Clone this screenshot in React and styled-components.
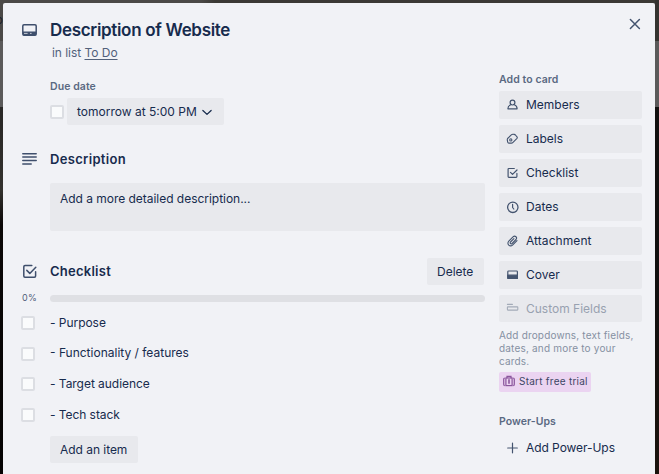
import React from "react";
import styled, { createGlobalStyle } from "styled-components";

const Global = createGlobalStyle`
  *, *::before, *::after { box-sizing: border-box; }
  body { margin: 0; overflow: hidden; }
`;

const Backdrop = styled.div`
  position: relative;
  height: 474px;
  padding: 3px 4px 0 3px;
  font-family: Inter, "Liberation Sans", sans-serif;
  font-size: 12px;
  line-height: 16px;
  color: #172b4d;
  background:
    linear-gradient(#353330 0 41px, #5b5a5a 41px 107px, #12100f 107px 300px, #1b120c) 100% 0 / 4px 100% no-repeat,
    linear-gradient(90deg, transparent 200px, #3b3935 215px) 0 0 / 100% 3px no-repeat,
    linear-gradient(#4b4947 0 41px, #5b5a5a 41px 107px, #2a2826 107px 125px, #34322e 190px, #0b0807 225px, #050303);
`;

/* End of the board title that shows beside the dialog */
const BoardTitle = styled.span`
  position: absolute;
  left: 0;
  top: 12px;
  width: 3px;
  overflow: hidden;
  direction: rtl;
  color: #1c2028;
`;

const Dialog = styled.main`
  display: grid;
  grid-template-columns: 435px 143px;
  column-gap: 14px;
  height: 471px;
  padding: 0 13px 0 47px;
  background: #f1f2f6;
  border-radius: 2px 2px 0 0;
  overflow: hidden;
`;

const Column = styled.section`
  display: flex;
  flex-direction: column;
  align-items: stretch;
  min-width: 0;
`;

const Text = styled.span`
  letter-spacing: ${(p) => p.$track || 0}px;
  white-space: nowrap;
`;

const Heading = styled.header`
  display: flex;
  align-items: center;
  height: ${(p) => p.$h || 20}px;
  margin-top: ${(p) => p.$top}px;
  margin-left: -29px;
`;

const HeadIcon = styled.span`
  display: flex;
  width: 29px;
  color: #3f4f6c;
`;

const Title = styled.h1`
  margin: 0;
  font-size: 17px;
  line-height: 20px;
  font-weight: 600;
  letter-spacing: -0.32px;
`;

const SectionTitle = styled.h2`
  flex: 1;
  margin: 0;
  padding-bottom: ${(p) => p.$lift || 0}px;
  font-size: 13px;
  line-height: 18px;
  font-weight: 600;
  letter-spacing: ${(p) => p.$track || 0}px;
`;

const InList = styled.p`
  margin: 5px 0 0 2px;
  color: #52617b;
  height: 16px;
  a { text-decoration: underline; text-underline-offset: 2px; }
`;

const Label = styled.h3`
  margin: ${(p) => p.$top}px 0 0;
  height: 14px;
  font-size: 10.5px;
  line-height: 14px;
  font-weight: 600;
  color: #5a6982;
  letter-spacing: ${(p) => p.$track || 0}px;
`;

const DueRow = styled.div`
  display: flex;
  align-items: center;
  gap: 3px;
  margin-top: 4px;
`;

const Check = styled.span`
  flex: none;
  width: 14px;
  height: 14px;
  border: 2px solid #dcdee3;
  border-radius: 2px;
  background: #fafbfc;
`;

const Button = styled.button`
  display: flex;
  align-items: center;
  flex: none;
  gap: 4px;
  width: ${(p) => p.$w}px;
  height: 27px;
  margin: ${(p) => p.$m || "0"};
  padding: ${(p) => p.$drop || 0}px 0 0 10px;
  border: 0;
  border-radius: 2px;
  background: #e8e9ed;
  color: inherit;
  font: inherit;
`;

const Editor = styled.div`
  height: 48px;
  margin-top: 15px;
  padding: 8px 10px;
  border-radius: 2px;
  background: #e8e9ed;
`;

const Progress = styled.div`
  display: flex;
  align-items: center;
  height: 12px;
  margin: 7px 0 0 -28px;
  font-size: 9px;
  color: #52617b;
`;

const Percent = styled.span`
  width: 28px;
  letter-spacing: 0.3px;
`;

const Track = styled.span`
  flex: 1;
  height: 7px;
  border-radius: 4px;
  background: #dfe0e4;
`;

const Items = styled.ul`
  display: flex;
  flex-direction: column;
  gap: 14.6px;
  margin: 11px 0 0 -29px;
  padding: 0;
  list-style: none;
`;

const Item = styled.li`
  display: flex;
  align-items: center;
  gap: 15px;
  height: 16px;
  ${Text} { padding-bottom: ${(p) => p.$lift || 0}px; }
`;

const Actions = styled.nav`
  display: flex;
  flex-direction: column;
  gap: 6px;
  margin-top: ${(p) => p.$top}px;
`;

const Action = styled.button`
  display: flex;
  align-items: center;
  height: ${(p) => (p.$disabled ? 27 : 28)}px;
  padding: 0 0 0 7px;
  border: 0;
  border-radius: 2px;
  background: ${(p) => (p.$plain ? "transparent" : "#e8e9ed")};
  color: ${(p) => (p.$disabled ? "#98a1b0" : "inherit")};
  font: inherit;
  text-align: left;
  svg { flex: none; width: 14px; height: 14px; margin: 0 6px 1px 0; color: ${(p) => (p.$disabled ? "#a3abb8" : "#44546f")}; }
`;

const Hint = styled.p`
  margin: 7px 0 0;
  font-size: 10px;
  line-height: 13px;
  color: #8590a2;
`;

const Line = styled(Text)`
  display: block;
`;

const Trial = styled.a`
  display: flex;
  align-items: center;
  gap: 4px;
  width: 92px;
  height: 20px;
  margin-top: 4px;
  padding: 0 0 2px 4px;
  border-radius: 2px;
  background: #ebd4f1;
  color: #3c4664;
  font-size: 10px;
`;

const Close = styled.button`
  display: flex;
  align-self: flex-end;
  width: 14px;
  height: 14px;
  margin: 14px 0 0;
  padding: 0;
  border: 0;
  background: none;
  color: #44546f;
`;

const Svg = ({ s = 14, children, ...rest }) => (
  <svg width={s} height={s} viewBox="0 0 14 14" fill="none" stroke="currentColor" strokeWidth="1.2" strokeLinecap="round" strokeLinejoin="round" {...rest}>
    {children}
  </svg>
);

const CardIcon = () => (
  <svg width="17" height="14" viewBox="0 0 17 14" fill="none">
    <rect x="1.8" y="1.8" width="13.4" height="10.4" rx="1.2" stroke="currentColor" strokeWidth="1.5" />
    <path d="M2 8.6h13v3.6H2z" fill="currentColor" />
    <path d="M3 10.4h3.6M9 10.4h1.6" stroke="#c5cad3" strokeWidth="1" />
  </svg>
);
const TextIcon = () => (
  <svg width="17" height="14" viewBox="0 0 17 14" stroke="currentColor" strokeWidth="1.5" strokeLinecap="round">
    <path d="M1.8 1.7h13.4M1.8 5.1h13.4M1.8 8.5h13.4M1.8 11.9h8.4" />
  </svg>
);
const BigCheckedBox = () => (
  <svg width="17" height="17" viewBox="0 0 17 17" fill="none" stroke="currentColor" strokeWidth="1.5" strokeLinecap="round" strokeLinejoin="round">
    <path d="M10.8 2.5H4Q2.8 2.5 2.8 3.7v9.4q0 1.2 1.2 1.2h9.4q1.2 0 1.2-1.2V8.7M5.8 7.4l3 3 6-6.2" />
  </svg>
);
const CheckedBox = () => (
  <Svg>
    <path d="M8.3 2.5H2.9Q2.1 2.5 2.1 3.3v7.2q0 .8.8.8h7.2q.8 0 .8-.8V7.4M4.5 6.4l2 2L11 4" />
  </Svg>
);
const PersonIcon = () => (
  <Svg><circle cx="6.5" cy="4.6" r="2.4" /><path d="M4.7 6.8Q1.9 7.9 1.9 10.8h9.2Q11.1 7.9 8.3 6.8" /></Svg>
);
const LabelIcon = () => (
  <Svg strokeWidth="1.1"><path d="m1.6 6.5 3.7-3.6q.8-.7 1.8-.6l1.1.1q.7.1 1.2.6l1.6 1.9q.6.7 0 1.4l-4 4.1q-.7.7-1.7.7H2.9q-1 0-1.2-1l-.4-1.9q-.1-1 .3-1.7Z" /><circle cx="4.8" cy="7.9" r="1.1" /></Svg>
);
const ClockIcon = () => (
  <Svg><circle cx="6.8" cy="7.3" r="5.2" strokeWidth="1.3" /><path d="M6.6 4.4v3.1l1.2 1.5" /></Svg>
);
const ClipIcon = () => (
  <Svg strokeWidth="1.1"><path d="m11 6.6-4.2 4.2c-2.9 2.6-6.6-.7-4-3.6L7 2.9c2.1-1.8 4.7.5 3 2.6L6.1 9.5c-1.2 1-2.6-.3-1.6-1.5l3.4-3.4" /></Svg>
);
const CoverIcon = () => (
  <Svg><rect x="1.8" y="3" width="9.6" height="7.4" rx=".8" /><path d="M1.8 7.2h9.6v3.2H1.8z" fill="currentColor" /></Svg>
);
const FieldsIcon = () => (
  <Svg strokeWidth="1.1"><path d="M1.4 3.4h5" /><rect x="1.4" y="5.9" width="10.4" height="3.2" rx=".5" /></Svg>
);
const PlusIcon = () => <Svg><path d="M6.5 2.2v9.6M1.7 7h9.6" /></Svg>;
const CrossIcon = () => <Svg strokeWidth="1.5"><path d="m2.4 2.5 9 9M11.4 2.5l-9 9" /></Svg>;
const ChevronIcon = () => <Svg s={12} strokeWidth="1.5"><path d="m2.2 5.2 4.8 4.6 4.8-4.6" /></Svg>;
const CaseIcon = () => (
  <svg width="12" height="12" viewBox="0 0 12 12" fill="none" stroke="#8a559c" strokeWidth="1.2">
    <path d="M4 3V1.4h4V3M1.8 3.2Q.7 3.2.7 4.2v5q0 1.3 1.1 1.4M10.2 3.2q1.1 0 1.1 1v5q0 1.3-1.1 1.4" />
    <rect x="2.9" y="3" width="6.2" height="7.6" /><path d="M6 4.2v4.6" strokeWidth="1.6" />
  </svg>
);

const ACTIONS = [
  ["Members", PersonIcon, 0],
  ["Labels", LabelIcon, 0],
  ["Checklist", CheckedBox, 0],
  ["Dates", ClockIcon, 0],
  ["Attachment", ClipIcon, 0.07],
  ["Cover", CoverIcon, 0],
];
const ITEMS = [
  ["- Purpose", -0.04, 0],
  ["- Functionality / features", 0, 2],
  ["- Target audience", -0.04, 0],
  ["- Tech stack", -0.06, 0],
];

export default function App() {
  return (
    <>
      <Global />
      <Backdrop>
        <BoardTitle>o</BoardTitle>
        <Dialog>
          <Column>
            <Heading $top={17}><HeadIcon><CardIcon /></HeadIcon><Title>Description of Website</Title></Heading>
            <InList><Text $track={-0.04}>in list <a>To Do</a></Text></InList>
            <Label $top={19} $track={0.08}>Due date</Label>
            <DueRow>
              <Check />
              <Button $w={157}><Text>tomorrow at 5:00 PM</Text><ChevronIcon /></Button>
            </DueRow>
            <Heading $top={25} $h={18}><HeadIcon><TextIcon /></HeadIcon><SectionTitle $track={0.32}>Description</SectionTitle></Heading>
            <Editor><Text $track={-0.03}>Add a more detailed description...</Text></Editor>
            <Heading $top={27} $h={27}>
              <HeadIcon><BigCheckedBox /></HeadIcon>
              <SectionTitle $track={0.25} $lift={2}>Checklist</SectionTitle>
              <Button $w={57} $m="0 1px 0 0"><Text>Delete</Text></Button>
            </Heading>
            <Progress><Percent>0%</Percent><Track /></Progress>
            <Items>
              {ITEMS.map(([label, track, lift]) => (
                <Item key={label} $lift={lift}><Check /><Text $track={track}>{label}</Text></Item>
              ))}
            </Items>
            <Button $w={88} $m="13px 0 0" $drop={1}><Text $track={-0.04}>Add an item</Text></Button>
          </Column>
          <Column>
            <Close aria-label="Close"><CrossIcon /></Close>
            <Label $top={42} $track={0.08}>Add to card</Label>
            <Actions $top={4}>
              {ACTIONS.map(([label, Icon, track]) => (
                <Action key={label}><Icon /><Text $track={track}>{label}</Text></Action>
              ))}
              <Action $disabled><FieldsIcon /><Text>Custom Fields</Text></Action>
            </Actions>
            <Hint><Line $track={0.17}>Add dropdowns, text fields,</Line><Line $track={0.19}>dates, and more to your</Line><Line $track={0.17}>cards.</Line></Hint>
            <Trial><CaseIcon /><Text $track={0.25}>Start free trial</Text></Trial>
            <Label $top={23} $track={0.03}>Power-Ups</Label>
            <Actions $top={5}><Action $plain><PlusIcon /><Text $track={-0.06}>Add Power-Ups</Text></Action></Actions>
          </Column>
        </Dialog>
      </Backdrop>
    </>
  );
}
